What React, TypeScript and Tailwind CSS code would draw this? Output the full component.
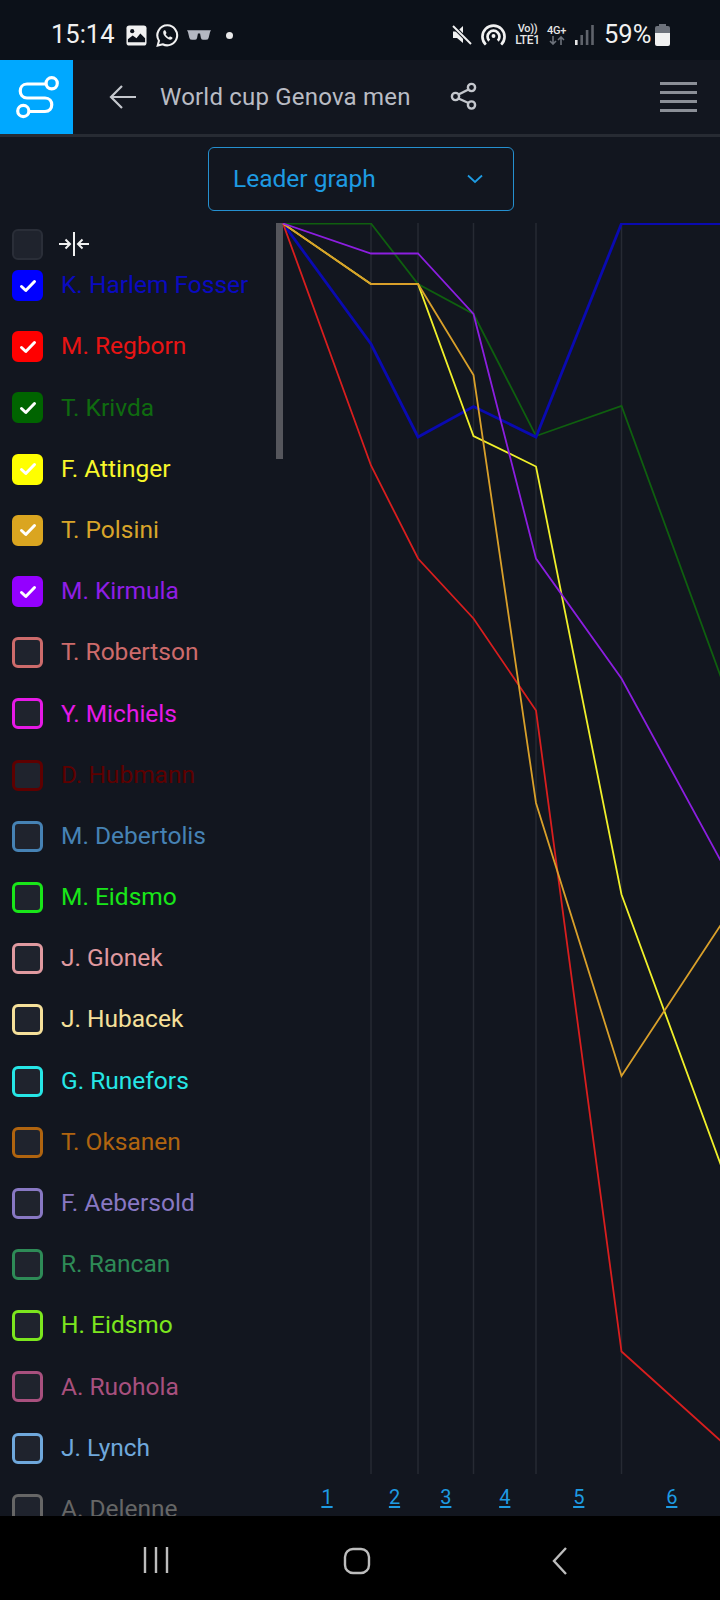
const rows: [string, string, boolean, string?][] = [
  ["K. Harlem Fosser", "#0000ff", true, "#0a0ac0"],
  ["M. Regborn", "#ff0000", true, "#e81414"],
  ["T. Krivda", "#006400", true, "#0f6b0f"],
  ["F. Attinger", "#ffff00", true, "#f7f72a"],
  ["T. Polsini", "#daa520", true, "#d9a52a"],
  ["M. Kirmula", "#9400ff", true, "#8f1ee6"],
  ["T. Robertson", "#cd6b6b", false],
  ["Y. Michiels", "#e619e6", false],
  ["D. Hubmann", "#5e0000", false],
  ["M. Debertolis", "#4682b4", false],
  ["M. Eidsmo", "#19e619", false],
  ["J. Glonek", "#e09aa0", false],
  ["J. Hubacek", "#f5e09a", false],
  ["G. Runefors", "#26e6e6", false],
  ["T. Oksanen", "#b0640f", false],
  ["F. Aebersold", "#8878c3", false],
  ["R. Rancan", "#2e8b57", false],
  ["H. Eidsmo", "#7ce61e", false],
  ["A. Ruohola", "#a8507e", false],
  ["J. Lynch", "#6fa8dc", false],
  ["A. Delenne", "#666666", false],
];
const X = [283, 371, 418, 473.5, 536, 621.5, 722];
const W = [88, 47, 55.5, 62.5, 85.5, 100.5];
const series: [string, number, number[]][] = [
  ["#0f5f0f", 1.8, [223.5, 223.5, 284, 314, 436, 406, 680]],
  ["#0a0ab0", 2.8, [223.5, 344, 437, 406.5, 437, 223.5, 223.5]],
  ["#d81e1e", 1.8, [223.5, 465.5, 558.5, 618.5, 710.5, 1351.5, 1442]],
  ["#f0f02a", 1.8, [223.5, 284, 284, 436, 466.5, 894.5, 1168]],
  ["#d9a02a", 1.8, [223.5, 284, 284, 375, 803, 1076, 923]],
  ["#8c1ee0", 1.8, [223.5, 253.5, 253.5, 314, 558.5, 678.5, 863]],
];

function Check() {
  return (
    <svg width="18" height="14" viewBox="0 0 18 14" fill="none">
      <path d="M2.5 7.5 L6.8 11.5 L15.5 2.5" stroke="#fff" strokeWidth="3" strokeLinecap="round" strokeLinejoin="round" />
    </svg>
  );
}

export default function App() {
  return (
    <div className="w-[720px] h-[1600px] flex flex-col overflow-hidden bg-[#12161f] font-['Roboto',sans-serif]">
      {/* status bar */}
      <div className="h-[60px] shrink-0 bg-[#0c1119] flex items-center pt-[10px] pl-[51px] pr-[50px] text-[#f1f1f1]">
        <span className="text-[25.5px] leading-none w-[75px]">15:14</span>
        <svg width="21" height="21" viewBox="0 0 22 22">
          <rect width="21" height="21" x="0.5" y="0.5" rx="3" fill="#f1f1f1" />
          <circle cx="6.5" cy="6.5" r="2.2" fill="#0c1119" />
          <path d="M2 18 L2 15 L7 11 L11 14 L15 9 L20 14 L20 18 Z" fill="#0c1119" />
        </svg>
        <svg className="ml-[8px]" width="25" height="25" viewBox="0 0 24 24" fill="none">
          <path d="M12 2.2 A9.6 9.6 0 0 0 3.8 17 L2.6 21.6 L7.4 20.4 A9.6 9.6 0 1 0 12 2.2 Z" stroke="#f1f1f1" strokeWidth="2" />
          <path d="M8.6 7.2 C7.4 8.4 7.6 10.6 9.6 13 C11.8 15.6 14.6 16.6 16 15.6 C17 14.8 16.9 14 16.6 13.8 L14.8 12.9 C14.4 12.8 14.1 12.9 13.9 13.2 L13.4 13.9 C12.4 13.6 10.8 12.2 10.2 10.8 L10.8 10.1 C11 9.8 11 9.5 10.9 9.2 L10.1 7.4 C9.8 6.9 9 6.9 8.6 7.2 Z" fill="#f1f1f1" />
        </svg>
        <svg className="ml-[7px]" width="24" height="10" viewBox="0 0 25 10">
          <path d="M0 0 H25 L24 2 L22.5 8 Q22 10 19.5 10 H17 Q15 10 14.5 8 L13.6 3.5 H11.4 L10.5 8 Q10 10 8 10 H5.5 Q3 10 2.5 8 L1 2 Z" fill="#b4b8c2" />
        </svg>
        <div className="ml-[15px] w-[7px] h-[7px] rounded-full bg-[#e8e8e8]" />
        <div className="flex-1" />
        <svg width="20" height="22" viewBox="0 0 20 22" fill="none">
          <path d="M1 7.5 H5 L11 2 V19 L5 14 H1 Z" fill="#f1f1f1" />
          <path d="M1 2 L19 20" stroke="#0c1119" strokeWidth="4" />
          <path d="M1 2 L19 20" stroke="#f1f1f1" strokeWidth="2" />
        </svg>
        <svg className="ml-[9px]" width="25" height="24" viewBox="0 0 26 24" fill="none" stroke="#f1f1f1" strokeWidth="2.8">
          <path d="M5 22 A11.5 11.5 0 1 1 21 22" />
          <path d="M8.5 18 A6.2 6.2 0 1 1 17.5 18" />
          <circle cx="13" cy="13" r="2" fill="#f1f1f1" stroke="none" />
        </svg>
        <div className="ml-[8px] w-[27px] flex flex-col items-center text-[#e6e6e6] leading-none font-medium">
          <span className="text-[11px] h-[10px] leading-[10px] tracking-tight">Vo))</span>
          <span className="text-[12px] h-[12px] leading-[12px] tracking-tight">LTE1</span>
        </div>
        <div className="ml-[5px] w-[21px] flex flex-col items-center leading-none font-medium">
          <span className="text-[#e6e6e6] text-[11px] h-[11px] leading-[11px] tracking-tight">4G+</span>
          <svg width="16" height="9" viewBox="0 0 16 9" fill="none" stroke="#6d727b" strokeWidth="1.6">
            <path d="M4 0 V8 M1 5 L4 8 L7 5 M12 9 V1 M9 4 L12 1 L15 4" />
          </svg>
        </div>
        <svg className="ml-[8px]" width="19" height="20" viewBox="0 0 19 20">
          <rect x="0" y="15" width="2.6" height="5" fill="#e6e6e6" />
          <rect x="5.4" y="10" width="2.6" height="10" fill="#5f636b" />
          <rect x="10.8" y="5" width="2.6" height="15" fill="#5f636b" />
          <rect x="16.2" y="0" width="2.6" height="20" fill="#5f636b" />
        </svg>
        <span className="ml-[10px] text-[25.5px] leading-none w-[47px]">59%</span>
        <div className="ml-[4px] w-[15px] h-[22px] flex flex-col items-center">
          <div className="w-[7px] h-[2px] bg-[#6d727b]" />
          <div className="w-[15px] h-[7px] bg-[#6d727b] rounded-t-[2px]" />
          <div className="w-[15px] h-[13px] bg-[#f1f1f1] rounded-b-[2px]" />
        </div>
      </div>

      {/* header */}
      <div className="h-[77px] shrink-0 flex items-center border-b-[3px] border-[#272b33] text-[#b9bcc4]">
        <div className="w-[73px] h-[74px] bg-[#00a8ff] flex items-center justify-center">
          <svg width="46" height="46" viewBox="0 0 46 46" fill="none" stroke="#fff" strokeWidth="3.2">
            <circle cx="37.7" cy="9.3" r="5.6" />
            <circle cx="9.3" cy="37" r="5.6" />
            <path d="M32 10 H13 C4 10 4 24 13 24 H31 C40 24 40 37.5 31 37.5 H15" />
          </svg>
        </div>
        <svg className="ml-[36px]" width="27" height="24" viewBox="0 0 27 24" fill="none" stroke="#c4c7cd" strokeWidth="2.2">
          <path d="M27 12 H2 M13 1 L2 12 L13 23" />
        </svg>
        <span className="ml-[24px] text-[24px] w-[290px] tracking-[0.2px] whitespace-nowrap">World cup Genova men</span>
        <svg className="mt-[-3px]" width="27" height="28" viewBox="0 0 27 28" fill="none" stroke="#c4c7cd" strokeWidth="2.4">
          <circle cx="21.5" cy="5.5" r="3.6" />
          <circle cx="5.5" cy="14.5" r="3.6" />
          <circle cx="21.5" cy="23" r="3.6" />
          <path d="M8.5 12.5 L18.5 7.5 M8.5 16.5 L18.5 21" />
        </svg>
        <div className="ml-auto mr-[23px] w-[37px] flex flex-col gap-[6.3px]">
          <div className="h-[3px] bg-[#8b8f97]" />
          <div className="h-[3px] bg-[#8b8f97]" />
          <div className="h-[3px] bg-[#8b8f97]" />
          <div className="h-[3px] bg-[#8b8f97]" />
        </div>
      </div>

      {/* dropdown */}
      <div className="h-[74px] shrink-0 pt-[10px] pl-[208px]">
        <div className="w-[306px] h-[64px] border-[1.5px] border-[#2590d0] rounded-[6px] flex items-center pl-[24px] pr-[30px] justify-between text-[#1e9be2]">
          <span className="text-[24.5px]">Leader graph</span>
          <svg width="16" height="10" viewBox="0 0 16 10" fill="none" stroke="#1e9be2" strokeWidth="1.8">
            <path d="M1 1.5 L8 8 L15 1.5" />
          </svg>
        </div>
      </div>

      {/* main */}
      <div className="flex-1 min-h-0 relative overflow-hidden flex">
        <div className="w-[276px] shrink-0 pl-[12px] pt-[17px]">
          <div className="flex items-center h-[32px]">
            <div className="w-[31px] h-[31px] rounded-[6px] bg-[#1f232d] border-2 border-[#2a2e38]" />
            <svg className="ml-[15px]" width="32" height="26" viewBox="0 0 32 26" fill="none" stroke="#f0f0f0" strokeWidth="2">
              <path d="M16 1 V25" />
              <path d="M1 13 H12 M7.5 8.5 L12 13 L7.5 17.5 M31 13 H20 M24.5 8.5 L20 13 L24.5 17.5" />
            </svg>
          </div>
          <div className="mt-[-5px]">
            {rows.map(([name, color, on, text]) => (
              <div key={name} className="flex items-center h-[61.2px]">
                <div
                  className="w-[31px] h-[31px] rounded-[6px] shrink-0 flex items-center justify-center border-[3px] bg-[#1f232d]"
                  style={{ borderColor: color, background: on ? color : undefined }}
                >
                  {on && <Check />}
                </div>
                <span className="ml-[18px] text-[24.5px] whitespace-nowrap" style={{ color: text ?? color }}>{name}</span>
              </div>
            ))}
          </div>
        </div>

        {/* chart area */}
        <div className="flex-1 relative">
          <div className="absolute left-0 top-[12px] w-[7px] h-[236px] bg-[#55565c]" />
          <svg className="absolute left-[-276px] top-[-211px]" width="720" height="1516" viewBox="0 0 720 1516" fill="none">
            <defs>
              <clipPath id="plot">
                <rect x="276" y="223" width="444" height="1260" />
              </clipPath>
            </defs>
            <g clipPath="url(#plot)">
              {X.slice(1, 6).map((x) => (
                <line key={x} x1={x} x2={x} y1="223" y2="1474" stroke="#262a33" strokeWidth="1.5" />
              ))}
              {series.map(([c, w, ys]) => (
                <polyline key={c} points={ys.map((y, i) => `${X[i]},${y}`).join(" ")} stroke={c} strokeWidth={w} />
              ))}
            </g>
          </svg>
          <div className="absolute left-[7px] bottom-[7px] flex text-[#1e9be2] text-[20px] leading-[24px]">
            {W.map((w, i) => (
              <div key={i} className="text-center underline underline-offset-[2px]" style={{ width: w }}>{i + 1}</div>
            ))}
          </div>
        </div>
      </div>

      {/* nav */}
      <div className="h-[84px] shrink-0 bg-black flex items-start pt-[31px]">
        <svg className="ml-[143px]" width="26" height="26" viewBox="0 0 26 26" stroke="#bdbdbd" strokeWidth="2.4">
          <path d="M2 0 V26 M13 0 V26 M24 0 V26" />
        </svg>
        <svg className="ml-[174px]" width="28" height="28" viewBox="0 0 28 28" fill="none" stroke="#bdbdbd" strokeWidth="2.4">
          <rect x="2" y="2" width="24" height="24" rx="8" />
        </svg>
        <svg className="ml-[180px]" width="17" height="28" viewBox="0 0 17 28" fill="none" stroke="#bdbdbd" strokeWidth="2.4">
          <path d="M15 1 L3 14 L15 27" />
        </svg>
      </div>
    </div>
  );
}
